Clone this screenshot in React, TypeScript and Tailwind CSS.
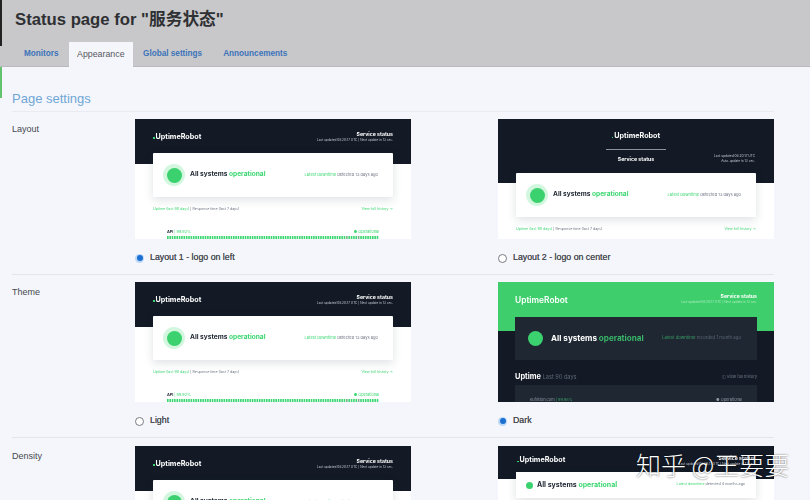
const bars = Array.from({ length: 90 }, (_, i) => i);

function Bars() {
  return (
    <svg viewBox="0 0 211 4" className="block h-[4px] w-full" preserveAspectRatio="none">
      {bars.map((b) => (
        <rect key={b} x={b * 2.345} width="1.6" height="4" fill={b === 76 || b === 81 ? "#7fb08f" : "#3bd671"} />
      ))}
    </svg>
  );
}

function StatusCircle() {
  return (
    <span className="flex h-[22px] w-[22px] shrink-0 items-center justify-center rounded-full bg-[#d3f6df]">
      <span className="h-[15px] w-[15px] rounded-full bg-[#3bd16f]" />
    </span>
  );
}

function SubRow() {
  return (
    <div className="flex justify-between px-[18px] text-[3.6px] text-[#6b7280]">
      <span>
        <span className="text-[#3bd671]">Uptime (last 90 days)</span> | Response time (last 7 days)
      </span>
      <span className="text-[#3bd671]">View full history →</span>
    </div>
  );
}

function StatusCard() {
  return (
    <div className="relative mx-[18px] flex h-[44px] items-center rounded-[1px] bg-white pl-[10px] pr-[15px] shadow-[0_3px_10px_rgba(30,40,60,0.14)]">
      <StatusCircle />
      <span className="ml-[5px] text-[6.6px] font-bold text-[#1c2430]">
        All systems <span className="text-[#3bd671]">operational</span>
      </span>
      <span className="ml-auto text-[4.05px] text-[#6b7280]">
        <span className="text-[#3bd671]">Latest downtime</span> detected 13 days ago
      </span>
    </div>
  );
}

function ApiCard() {
  return (
    <div className="mx-[18px] mt-[8px] bg-white px-[14px] pt-[9px]">
      <div className="flex justify-between text-[3.8px]">
        <span className="font-bold text-[#1c2430]">
          API <span className="font-normal text-[#3bd671]">| 99.92%</span>
        </span>
        <span className="text-[#3bd671]">● Operational</span>
      </div>
      <div className="mt-[1px]">
        <Bars />
      </div>
    </div>
  );
}

function Shell({ children, className }: { children: React.ReactNode; className: string }) {
  return (
    <div className={"h-[120px] w-[276px] shrink-0 overflow-hidden font-['Inter',sans-serif] blur-[0.35px] " + className}>
      {children}
    </div>
  );
}

function LightPreview() {
  return (
    <Shell className="bg-white">
      <div className="flex h-[45px] items-start justify-between bg-[#131a26] px-[18px] pt-[12px] text-white">
        <span className="mt-[0.5px] flex items-baseline text-[7.2px] font-bold">
          <span className="mr-[1px] h-[1.5px] w-[1.5px] bg-[#3bd671]" />
          UptimeRobot
        </span>
        <span className="text-right">
          <span className="block text-[5.2px] font-bold leading-[7px]">Service status</span>
          <span className="block text-[3.15px] leading-[5px] text-[#c4c9d2]">Last updated 08:20:17 UTC | Next update in 13 sec.</span>
        </span>
      </div>
      <div className="-mt-[11px]">
        <StatusCard />
      </div>
      <div className="mt-[10px]">
        <SubRow />
      </div>
      <ApiCard />
    </Shell>
  );
}

function CenterPreview() {
  return (
    <Shell className="bg-white">
      <div className="relative flex h-[64px] flex-col items-center bg-[#131a26] pt-[12px] text-white">
        <span className="flex items-baseline text-[7.2px] font-bold">
          <span className="mr-[1px] h-[1.5px] w-[1.5px] bg-[#3bd671]" />
          UptimeRobot
        </span>
        <span className="mt-[7px] h-px w-[60px] bg-[#8b93a0]" />
        <span className="mt-[6px] text-[5.2px] font-bold">Service status</span>
        <span className="absolute right-[19px] top-[35px] text-right text-[3.2px] leading-[4.5px] text-[#c4c9d2]">
          Last updated 08:20:17 UTC
          <br />
          Auto-update in 13 sec.
        </span>
      </div>
      <div className="-mt-[10px]">
        <StatusCard />
      </div>
      <div className="mt-[10px]">
        <SubRow />
      </div>
    </Shell>
  );
}

function DarkPreview() {
  return (
    <Shell className="bg-[#131a26]">
      <div className="flex h-[49px] items-start justify-between bg-[#3ecf6c] px-[17px] pt-[11px] text-white">
        <span className="mt-[1px] text-[8.4px] font-semibold">UptimeRobot</span>
        <span className="text-right">
          <span className="block text-[5.2px] font-bold leading-[7px]">Service status</span>
          <span className="block text-[3.15px] leading-[5px] text-[#a5ebbc]">Last updated 08:20:17 UTC | Next update in 13 sec.</span>
        </span>
      </div>
      <div className="mx-[17px] -mt-[14px] flex h-[43px] items-center bg-[#1e2732] pl-[13px] pr-[16px]">
        <span className="h-[15px] w-[15px] shrink-0 rounded-full bg-[#3bd16f]" />
        <span className="ml-[8px] text-[8.1px] font-bold text-white">
          All systems <span className="text-[#38b568]">operational</span>
        </span>
        <span className="ml-auto text-[4.3px] text-[#5c6675]">
          <span className="text-[#3a9e64]">Latest downtime</span> recorded 1 month ago
        </span>
      </div>
      <div className="mx-[17px] mt-[11px] flex items-center justify-between">
        <span className="text-[7.4px] font-bold text-white">
          Uptime <span className="text-[5.6px] font-normal text-[#5c6675]">Last 90 days</span>
        </span>
        <span className="text-[4px] text-[#6f7a89]">◫ View full history</span>
      </div>
      <div className="mx-[17px] mt-[3px] flex h-[30px] justify-between bg-[#1e2732] px-[15px] pt-[12px] text-[3.9px] text-[#8d97a5]">
        <span>
          kuflixion.com <span className="text-[#3a9e64]">| 99.98%</span>
        </span>
        <span>● Operational</span>
      </div>
    </Shell>
  );
}

function CompactPreview() {
  return (
    <Shell className="bg-white">
      <div className="flex h-[33px] items-start justify-between bg-[#131a26] px-[19px] pt-[9px] text-white">
        <span className="flex items-baseline text-[7.2px] font-bold">
          <span className="mr-[1px] h-[1.5px] w-[1.5px] bg-[#3bd671]" />
          UptimeRobot
        </span>
        <span className="text-right">
          <span className="block text-[5.2px] font-bold leading-[7px]">Service status</span>
          <span className="block text-[3.15px] leading-[5px] text-[#c4c9d2]">Last updated 08:20:17 UTC | Next update in 13 sec.</span>
        </span>
      </div>
      <div className="-mt-[7px]">
        <div className="relative mx-[18px] flex h-[26px] items-center bg-white pl-[10px] pr-[11px] shadow-[0_3px_10px_rgba(30,40,60,0.14)]">
          <span className="h-[7px] w-[7px] shrink-0 rounded-full bg-[#3bd16f]" />
          <span className="ml-[4px] text-[7px] font-bold text-[#1c2430]">
            All systems <span className="text-[#3bd671]">operational</span>
          </span>
          <span className="ml-auto text-[3.6px] text-[#6b7280]">
            <span className="text-[#3bd671]">Latest downtime</span> detected 4 months ago
          </span>
        </div>
      </div>
    </Shell>
  );
}

function Radio({ label, checked }: { label: string; checked?: boolean }) {
  return (
    <label className="mt-[13px] flex h-[12px] items-center text-[8.8px] font-normal text-[#4a4e54] [text-shadow:0_0_0.4px_#4a4e54]">
      {checked ? (
        <span className="flex h-[9px] w-[9px] items-center justify-center rounded-full bg-[#bcd8f5]">
          <span className="h-[6px] w-[6px] rounded-full bg-[#1a6fd0]" />
        </span>
      ) : (
        <span className="h-[9px] w-[9px] rounded-full border border-[#777c82] bg-white" />
      )}
      <span className="ml-[6px]">{label}</span>
    </label>
  );
}

function SettingRow({ title, children, last }: { title: string; children: React.ReactNode; last?: boolean }) {
  return (
    <div className={last ? "flex pt-[8px]" : "flex border-b border-[#e3e5ea] pt-[7px] pb-[10px]"}>
      <div className="w-[123px] shrink-0 pt-[4px] text-[9px] text-[#45494f]">{title}</div>
      <div className="flex gap-[87px]">{children}</div>
    </div>
  );
}

function Tab({ label, active }: { label: string; active?: boolean }) {
  return (
    <div
      className={
        active
          ? "flex h-[25px] items-center bg-[#f5f6fb] px-[8px] text-[8.8px] text-[#55595e]"
          : "flex h-[25px] items-center px-[10.5px] text-[8.2px] font-bold text-[#3b73b9]"
      }
    >
      {label}
    </div>
  );
}

export default function App() {
  return (
    <div className="relative h-[500px] w-[810px] overflow-hidden bg-[#f5f6fb] font-['Liberation_Sans','Noto_Sans_CJK_SC',sans-serif]">
      <div className="h-[67px] border-b border-[#b9babd] bg-[#c8c8cb] pl-[15px]">
        <h1 className="pt-[9px] text-[16.7px] font-bold leading-[21px] text-[#2f3033]">Status page for "服务状态"</h1>
        <div className="-ml-[1.5px] mt-[12px] flex">
          <Tab label="Monitors" />
          <Tab label="Appearance" active />
          <Tab label="Global settings" />
          <Tab label="Announcements" />
        </div>
      </div>

      {/* strips on the left edge of the window */}
      <span className="absolute left-0 top-0 h-[46px] w-[1.5px] bg-[#222]" />
      <span className="absolute left-0 top-[67px] h-[31px] w-[1.5px] bg-[#62c26e]" />

      <div className="pl-[12px] pr-[36px]">
        <h2 className="flex h-[45px] items-end border-b border-[#e9ebf0] pb-[4px] text-[13px] leading-[16px] text-[#6fa6d6]">
          Page settings
        </h2>
        <SettingRow title="Layout">
          <div>
            <LightPreview />
            <Radio label="Layout 1 - logo on left" checked />
          </div>
          <div>
            <CenterPreview />
            <Radio label="Layout 2 - logo on center" />
          </div>
        </SettingRow>
        <SettingRow title="Theme">
          <div>
            <LightPreview />
            <Radio label="Light" />
          </div>
          <div>
            <DarkPreview />
            <Radio label="Dark" checked />
          </div>
        </SettingRow>
        <SettingRow title="Density" last>
          <LightPreview />
          <CompactPreview />
        </SettingRow>
      </div>

      {/* site watermark */}
      <div className="absolute left-[636px] top-[447px] font-['Noto_Sans_CJK_SC',sans-serif] text-[25px] font-light leading-[34px] text-white [text-shadow:0_0_2px_rgba(0,0,0,0.75)]">
        知乎 @王要要
      </div>
    </div>
  );
}
